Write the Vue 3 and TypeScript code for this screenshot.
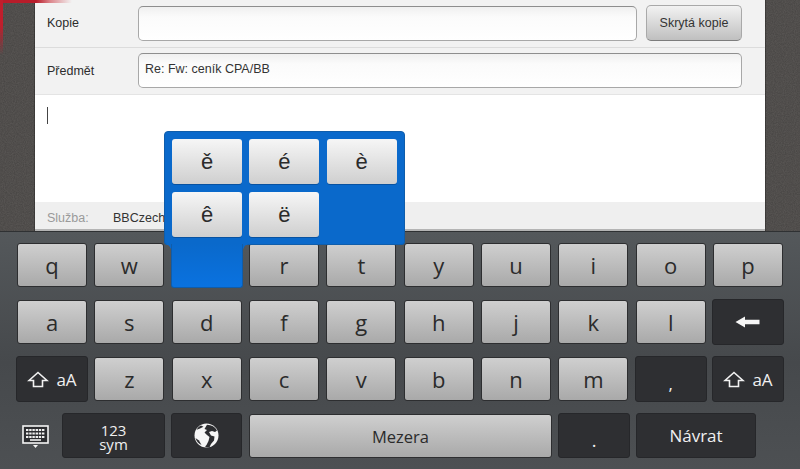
<template>
  <div class="screen">
    <div class="desk">
      <div class="mail">
        <div class="row row-copy">
          <label>Kopie</label>
          <div class="field"></div>
          <button class="bcc">Skrytá kopie</button>
        </div>
        <div class="row row-subject">
          <label>Předmět</label>
          <div class="field">Re: Fw: ceník CPA/BB</div>
        </div>
        <div class="body"><span class="caret"></span></div>
        <div class="service">
          <span class="service-label">Služba:</span>
          <span class="service-value">BBCzech</span>
        </div>
      </div>
      <div class="corner-top"></div>
      <div class="corner-left"></div>
    </div>

    <div class="keyboard">
      <div class="keys">
        <template v-for="k in letterKeys" :key="k.id">
          <div v-if="k.kind === 'blank'" class="slot"></div>
          <div v-else-if="k.kind === 'shift'" class="key dark shift">
            <svg width="22" height="17" viewBox="0 0 22 17">
              <path d="M11 1.5 L20 9.5 H15.5 V15.5 H6.5 V9.5 H2 Z" fill="none" stroke="#f2f2f2" stroke-width="1.6" stroke-linejoin="miter" />
            </svg>
            <span>aA</span>
          </div>
          <div v-else-if="k.kind === 'back'" class="key dark">
            <svg width="25" height="12" viewBox="0 0 25 12">
              <path d="M0.5 6 L10 0.5 V3.8 H24.5 V8.2 H10 V11.5 Z" fill="#f6f6f6" />
            </svg>
          </div>
          <div v-else-if="k.kind === 'comma'" class="key dark comma">,</div>
          <div v-else class="key">{{ k.label }}</div>
        </template>
      </div>
      <div class="bottom">
        <div class="hide-kb">
          <svg width="28" height="24" viewBox="0 0 28 24">
            <rect x="1" y="1" width="25" height="17" fill="#2c2d30" stroke="#f4f4f4" stroke-width="1.6" />
            <path d="M4 5 H23 M4 8.5 H23 M4 12 H23" stroke="#f0f0f0" stroke-width="2.2" stroke-dasharray="2.4 0.8" />
            <path d="M8 15 H19" stroke="#f0f0f0" stroke-width="1.6" />
            <path d="M11 20 H16 L13.5 23 Z" fill="#f4f4f4" />
          </svg>
        </div>
        <div class="key dark sym"><span>123</span><span>sym</span></div>
        <div class="key dark globe">
          <svg width="25" height="25" viewBox="0 0 25 25">
            <circle cx="12.5" cy="12.5" r="12" fill="#f6f6f6" />
            <path d="M7 2.6 C5 3.6 3.5 5 2.6 6.8 L6 5.5 L9.5 3.8 Z" fill="#2c2d30" />
            <path d="M13 1.8 L10.5 6 L13 7 L10.5 9.5 L13 12 L15.5 14 L14.5 18 L12.5 22 L11 23.5 C12 24.3 14 24.5 15.5 24.2 L17 21 L20 17.5 L20.5 13.5 L17 12.5 L15 9 L18 8 L21 9 L23 7.5 C21 4 17.5 2 13 1.8 Z" fill="#2c2d30" />
            <path d="M1.5 15 L5 17.5 L7.5 22 C4.5 20.8 2.4 18 1.5 15 Z" fill="#2c2d30" />
          </svg>
        </div>
        <div class="key space">Mezera</div>
        <div class="key dark dot">.</div>
        <div class="key dark enter">Návrat</div>
      </div>
    </div>

    <div class="accents">
      <div class="accent-panel">
        <div v-for="a in accents" :key="a" class="accent">{{ a }}</div>
      </div>
      <div class="accent-tab"></div>
    </div>
  </div>
</template>

<script setup lang="ts">
interface KeyDef {
  id: string
  label: string
  kind: 'letter' | 'blank' | 'shift' | 'back' | 'comma'
}

const letter = (label: string): KeyDef => ({ id: label, label, kind: 'letter' })

const letterKeys: KeyDef[] = [
  ...'qw'.split('').map(letter),
  { id: 'e', label: '', kind: 'blank' },
  ...'rtyuiop'.split('').map(letter),
  ...'asdfghjkl'.split('').map(letter),
  { id: 'back', label: '', kind: 'back' },
  { id: 'shift-l', label: '', kind: 'shift' },
  ...'zxcvbnm'.split('').map(letter),
  { id: 'comma', label: ',', kind: 'comma' },
  { id: 'shift-r', label: '', kind: 'shift' },
]

const accents = ['ě', 'é', 'è', 'ê', 'ë']
</script>

<style>
html,
body {
  margin: 0;
  background: #4b4e51;
}
</style>

<style scoped>
.screen {
  position: relative;
  width: 800px;
  height: 469px;
  overflow: hidden;
  font-family: "Liberation Sans", Arial, sans-serif;
}

.desk {
  position: relative;
  height: 231px;
  padding: 0 35px;
  box-sizing: border-box;
  background-color: #5c5957;
  background-image: url("data:image/svg+xml,%3Csvg xmlns='http://www.w3.org/2000/svg' width='200' height='200'%3E%3Cfilter id='n'%3E%3CfeTurbulence type='fractalNoise' baseFrequency='0.9' numOctaves='2'/%3E%3CfeColorMatrix values='0 0 0 0 0 0 0 0 0 0 0 0 0 0 0 0 0 0 0.55 0'/%3E%3C/filter%3E%3Crect width='200' height='200' filter='url(%23n)' opacity='0.45'/%3E%3C/svg%3E");
}

.corner-top {
  position: absolute;
  left: 0;
  top: 0;
  width: 72px;
  height: 3px;
  background: linear-gradient(90deg, #b81c2a 0, #b81c2a 36px, rgba(205, 60, 70, 0.6) 50px, rgba(255, 255, 255, 0) 72px);
}

.corner-left {
  position: absolute;
  left: 0;
  top: 0;
  width: 3px;
  height: 55px;
  background: linear-gradient(#c01e2c, #c01e2c 25px, rgba(192, 30, 44, 0));
}

.mail {
  position: relative;
  display: flex;
  flex-direction: column;
  height: 231px;
  background: #fff;
  box-shadow: 1px 0 0 rgba(0, 0, 0, 0.25), -1px 0 0 rgba(0, 0, 0, 0.25);
}

.row {
  display: flex;
  align-items: flex-start;
  box-sizing: border-box;
  padding-left: 12px;
  background: #f2f2f2;
  font-size: 12.5px;
  color: #2c2c2c;
}

.row label {
  width: 91px;
  flex: none;
  line-height: 14px;
}

.row-copy {
  height: 48px;
  padding-top: 6px;
  border-bottom: 1px solid #dcdcdc;
}

.row-copy label {
  margin-top: 10px;
}

.row-subject {
  height: 47px;
  padding-top: 5px;
  border-bottom: 1px solid #e4e4e4;
}

.row-subject label {
  margin-top: 11px;
}

.field {
  box-sizing: border-box;
  height: 35px;
  width: 604px;
  padding: 0 6px;
  line-height: 31px;
  border: 1px solid #a8a8a8;
  border-top-color: #8e8e8e;
  border-radius: 5px;
  background: linear-gradient(#f0f0f0, #fbfbfb 10px, #fff);
  color: #333;
  font-size: 12.5px;
}

.row-copy .field {
  width: 499px;
}

.bcc {
  box-sizing: border-box;
  width: 96px;
  height: 36px;
  margin: -1px 0 0 9px;
  padding: 0;
  border: 1px solid #a9a9a9;
  border-bottom-color: #7d7d7d;
  border-radius: 5px;
  background: linear-gradient(#f2f2f2, #bfbfbf);
  color: #333;
  font-family: inherit;
  font-size: 12.5px;
}

.body {
  flex: 1;
  padding: 12px 12px 0;
}

.caret {
  display: block;
  width: 1px;
  height: 17px;
  background: #444;
}

.service {
  display: flex;
  align-items: center;
  height: 29px;
  padding: 4px 12px 0;
  box-sizing: border-box;
  background: #efefef;
  border-bottom: 2px solid #b4b4b4;
  font-size: 12.5px;
}

.service-label {
  width: 66px;
  color: #9a9a9a;
}

.service-value {
  color: #333;
}

.keyboard {
  box-sizing: border-box;
  height: 238px;
  padding: 11px 17px 0;
  border-top: 1px solid #2f3133;
  background: linear-gradient(#54585b, #46494c 55%, #4d5053);
  font-family: "Open Sans", "Noto Sans", sans-serif;
}

.keys {
  display: grid;
  grid-template-columns: repeat(10, 1fr);
  grid-auto-rows: 44px;
  column-gap: 7.33px;
  row-gap: 13px;
}

.key {
  display: flex;
  align-items: center;
  justify-content: center;
  box-sizing: border-box;
  border: 1px solid #2d2e30;
  border-radius: 3px;
  background: linear-gradient(#cfcfcf, #a9a9a9);
  color: #2b2b2b;
  font-size: 22px;
}

.key.dark {
  margin: -1px;
  background: #2e2f32;
  border-color: #26272a;
  color: #f0f0f0;
}

.shift {
  gap: 7px;
}

.shift span {
  font-size: 17px;
}

.comma {
  font-size: 17px;
  padding-top: 8px;
}

.bottom {
  display: grid;
  grid-template-columns: 39px 103px 72px 303px 72px 120px;
  column-gap: 6px;
  grid-template-rows: 44px;
  margin-top: 13px;
}

.bottom .key.dark {
  margin: -1px 0 0;
}

.bottom .key.globe {
  margin-right: 1px;
}

.hide-kb {
  display: flex;
  align-items: center;
  justify-content: flex-start;
  padding: 1px 0 0 5px;
}

.sym {
  flex-direction: column;
  padding-top: 2px;
  font-size: 15px;
  line-height: 14px;
}

.sym span {
  display: block;
  height: 14px;
}

.space {
  font-size: 16.5px;
}

.dot {
  font-size: 18px;
  padding-top: 9px;
}

.enter {
  font-size: 17px;
}

.accents {
  position: absolute;
  left: 164px;
  top: 131px;
  width: 241px;
}

.accent-panel {
  box-sizing: border-box;
  display: grid;
  grid-template-columns: repeat(3, 70px);
  grid-auto-rows: 45px;
  column-gap: 7.33px;
  row-gap: 8px;
  height: 114px;
  padding: 7px 7px;
  border: 1px solid #0f5dab;
  border-radius: 4px 4px 3px 3px;
  background: #0a69cb;
}

.accent {
  display: flex;
  align-items: center;
  justify-content: center;
  border-radius: 3px;
  box-sizing: border-box;
  background: linear-gradient(#f6f6f6, #cfcfcf);
  box-shadow: 0 1px 0 rgba(6, 60, 120, 0.5);
  color: #2b2b2b;
  font-size: 22px;
}

.accent-tab {
  position: relative;
  box-sizing: border-box;
  width: 72px;
  height: 44px;
  margin: -1px 0 0 7px;
  border: 1px solid #0f5dab;
  border-top: 0;
  border-radius: 0 0 3px 3px;
  background: linear-gradient(#0a69cb, #0a72e0);
}

.accent-tab::before,
.accent-tab::after {
  content: "";
  position: absolute;
  top: 0;
  width: 6px;
  height: 6px;
}

.accent-tab::before {
  left: -7px;
  background: radial-gradient(circle at 0 100%, transparent 5.5px, #0a69cb 6px);
}

.accent-tab::after {
  right: -7px;
  background: radial-gradient(circle at 100% 100%, transparent 5.5px, #0a69cb 6px);
}

.slot {
  height: 44px;
}
</style>
